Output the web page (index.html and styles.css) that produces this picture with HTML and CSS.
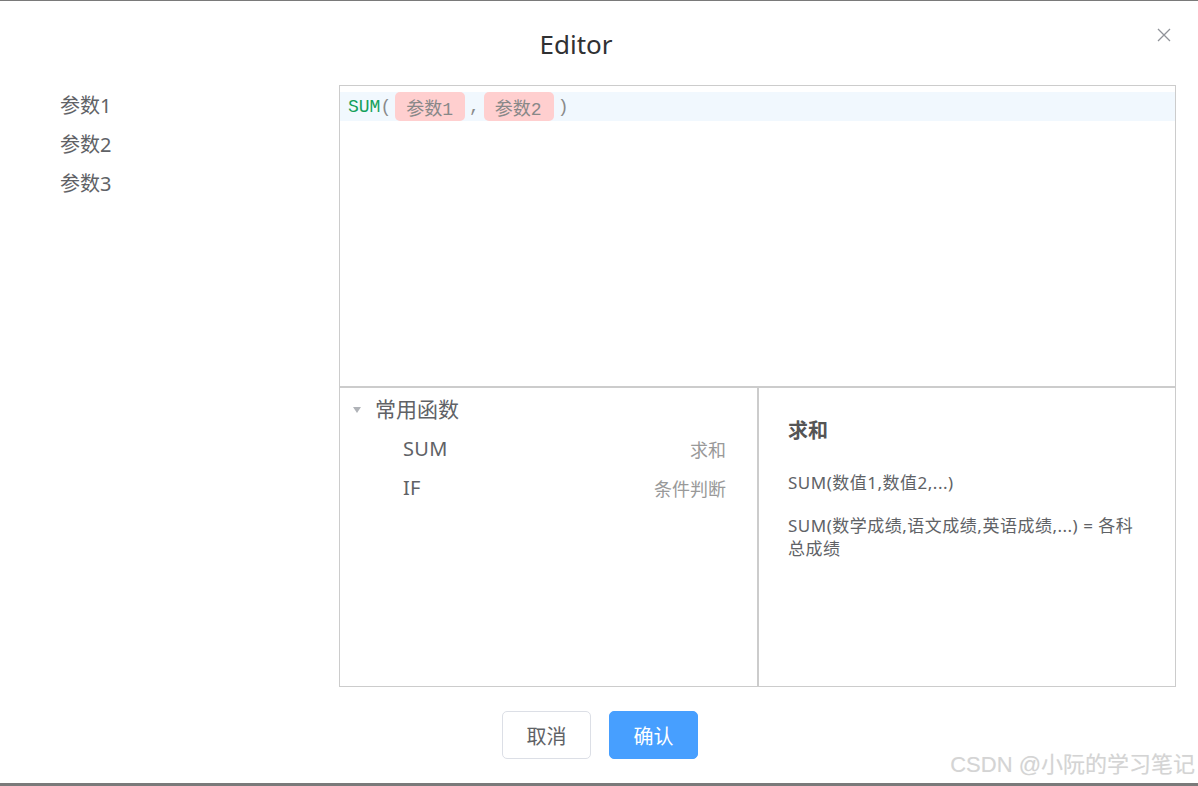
FILE: index.html
```html
<!DOCTYPE html>
<html lang="zh">
<head>
<meta charset="utf-8">
<title>Editor</title>
<link rel="stylesheet" href="styles.css">
</head>
<body>
<div class="page">
  <header class="header">
    <h1 class="title">Editor</h1>
    <button class="close" aria-label="close">
      <svg width="16" height="16" viewBox="0 0 16 16"><path d="M2 2 L14 14 M14 2 L2 14" stroke="#909399" stroke-width="1.3" fill="none"/></svg>
    </button>
  </header>
  <main class="body">
    <ul class="params">
      <li>参数1</li>
      <li>参数2</li>
      <li>参数3</li>
    </ul>
    <section class="editor">
      <div class="code">
        <div class="code-line"><span class="fn">SUM</span><span class="punc">(</span><span class="chip">参数1</span><span class="punc">,</span><span class="chip">参数2</span><span class="punc">)</span></div>
      </div>
      <div class="lower">
        <div class="tree">
          <div class="tree-group"><span class="caret"></span>常用函数</div>
          <div class="tree-item"><span class="name">SUM</span><span class="desc">求和</span></div>
          <div class="tree-item"><span class="name">IF</span><span class="desc">条件判断</span></div>
        </div>
        <div class="doc">
          <h2 class="doc-title">求和</h2>
          <p class="doc-syntax">SUM(数值1,数值2,...)</p>
          <p class="doc-example">SUM(数学成绩,语文成绩,英语成绩,...) = 各科总成绩</p>
        </div>
      </div>
    </section>
  </main>
  <footer class="footer">
    <button class="btn">取消</button>
    <button class="btn btn-primary">确认</button>
  </footer>
  <div class="watermark">CSDN @小阮的学习笔记</div>
</div>
</body>
</html>
```
FILE: styles.css
```css
* { box-sizing: border-box; }
html, body { margin: 0; padding: 0; background: #fff; }
body {
  font-family: "Noto Sans", "Noto Sans CJK SC", sans-serif;
  color: #606266;
}
.page {
  position: relative;
  width: 1198px;
  height: 786px;
  border-top: 1px solid #7a7a7a;
  border-bottom: 3px solid #7a7a7a;
  overflow: hidden;
}
.header {
  position: relative;
  height: 84px;
  padding-top: 25px;
  padding-right: 46px;
  text-align: center;
}
.title {
  margin: 0;
  font-size: 26px;
  line-height: 36px;
  font-weight: 400;
  color: #303133;
}
.close {
  position: absolute;
  top: 26px;
  left: 1156px;
  padding: 0;
  border: 0;
  background: none;
  width: 16px;
  height: 16px;
  line-height: 0;
}
.body {
  display: flex;
  height: 602px;
}
.params {
  list-style: none;
  margin: 0;
  padding: 1px 0 0 60px;
  width: 339px;
  font-size: 20px;
  line-height: 39px;
  color: #606266;
}
.editor {
  width: 837px;
  height: 602px;
  border: 1px solid #cccccc;
  display: flex;
  flex-direction: column;
}
.code {
  height: 302px;
  padding-top: 6px;
  border-bottom: 2px solid #cccccc;
  font-family: "Liberation Mono", "Noto Sans CJK SC", monospace;
  font-size: 18px;
}
.code-line {
  display: flex;
  align-items: center;
  height: 29px;
  padding-left: 8px;
  background: #f1f8fe;
}
.fn { color: #14a05a; }
.punc { color: #8a8a8a; }
.chip {
  display: inline-flex;
  align-items: center;
  height: 29px;
  margin: 0 4px;
  padding: 0 12px 0 11px;
  background: #ffcfcf;
  border-radius: 5px;
  color: #888888;
}
.lower {
  flex: 1;
  display: flex;
}
.tree {
  width: 419px;
  border-right: 2px solid #cccccc;
  padding: 2px 31px 0 13px;
}
.tree-group {
  display: flex;
  align-items: center;
  font-size: 21px;
  line-height: 39px;
  color: #606266;
}
.caret {
  width: 0;
  height: 0;
  border-left: 4.5px solid transparent;
  border-right: 4.5px solid transparent;
  border-top: 6px solid #b0b3b8;
  margin-right: 14px;
}
.tree-item {
  display: flex;
  justify-content: space-between;
  align-items: center;
  height: 39px;
  padding-left: 50px;
}
.tree-item .name { font-size: 20px; color: #606266; letter-spacing: 0.3px; }
.tree-item .desc { font-size: 18px; color: #999999; }
.doc {
  flex: 1;
  padding: 29px 30px 0 29px;
}
.doc-title {
  margin: 0;
  font-size: 20px;
  line-height: 28px;
  font-weight: 700;
  color: #555555;
}
.doc-syntax {
  margin: 26px 0 0;
  font-size: 17px;
  line-height: 23px;
  letter-spacing: 0.5px;
  color: #606266;
}
.doc-example {
  margin: 20px 0 0;
  font-size: 17px;
  line-height: 23px;
  letter-spacing: 0.5px;
  color: #606266;
}
.footer {
  display: flex;
  justify-content: center;
  gap: 18px;
  padding-top: 24px;
  padding-left: 2px;
}
.btn {
  width: 89px;
  height: 48px;
  border: 1px solid #dcdfe6;
  border-radius: 5px;
  background: #fff;
  font-family: "Noto Sans CJK SC", sans-serif;
  font-size: 20px;
  color: #606266;
  padding: 0;
}
.btn-primary {
  background: #479fff;
  border-color: #479fff;
  color: #fff;
}
.watermark {
  position: absolute;
  right: 3px;
  bottom: 3px;
  font-family: "Liberation Sans", "Noto Sans CJK SC", sans-serif;
  font-size: 22px;
  line-height: 30px;
  color: #d4d4d4;
  text-shadow: 0 0 1px #eee;
}
```
